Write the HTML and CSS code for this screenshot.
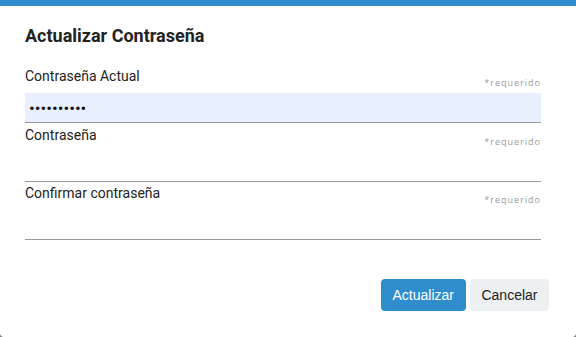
FILE: index.html
```html
<!DOCTYPE html>
<html lang="es">
<head>
    <meta charset="UTF-8">
    <meta name="viewport" content="width=device-width, initial-scale=1.0">
    <title>Actualizar Contraseña</title>
    <link rel="stylesheet" href="styles.css">
</head>
<body>
    <div class="dialog">
        <div class="dialog-bar"></div>
        <div class="dialog-body">
            <h2 class="dialog-title">Actualizar Contraseña</h2>
            <form class="form">
                <div class="field">
                    <div class="field-head">
                        <label for="current">Contraseña Actual</label>
                        <span class="required">*requerido</span>
                    </div>
                    <input id="current" class="input filled" type="password" value="0123456789">
                </div>
                <div class="field">
                    <div class="field-head">
                        <label for="password">Contraseña</label>
                        <span class="required">*requerido</span>
                    </div>
                    <input id="password" class="input" type="password">
                </div>
                <div class="field">
                    <div class="field-head">
                        <label for="confirm">Confirmar contraseña</label>
                        <span class="required">*requerido</span>
                    </div>
                    <input id="confirm" class="input" type="password">
                </div>
            </form>
        </div>
        <div class="dialog-footer">
            <button class="btn btn-primary" type="button">Actualizar</button>
            <button class="btn btn-light" type="button">Cancelar</button>
        </div>
    </div>
</body>
</html>
```

FILE: styles.css
```css
html, body {
    margin: 0;
    padding: 0;
    background: #7a7a7a;
}
body {
    font-family: Roboto, "Liberation Sans", Arial, sans-serif;
    color: #222;
}
.dialog {
    width: 576px;
    height: 337px;
    background: #fff;
    border-radius: 0 0 4px 4px;
    display: flex;
    flex-direction: column;
}
.dialog-bar {
    height: 6px;
    background: #2f8dcd;
}
.dialog-body {
    padding: 19px 35px 0 25px;
}
.dialog-title {
    margin: 0;
    font-size: 18px;
    line-height: 22px;
    font-weight: 700;
    color: #222;
}
.form {
    margin-top: 21px;
}
.field {
    margin-bottom: 3.5px;
}
.field-head {
    display: flex;
    justify-content: space-between;
    align-items: flex-start;
    height: 25px;
}
.field-head label {
    font-size: 14px;
    line-height: 17px;
    color: #222;
}
.required {
    align-self: flex-end;
    margin-bottom: 5px;
    font-family: "Open Sans", "DejaVu Sans", sans-serif;
    font-size: 9px;
    line-height: 11px;
    letter-spacing: 1px;
    color: #9a9a9a;
}
.input {
    display: block;
    box-sizing: border-box;
    width: 100%;
    height: 30px;
    margin: 0;
    padding: 0 4px;
    border: none;
    border-bottom: 1px solid #999;
    background: transparent;
    font-family: Roboto, sans-serif;
    font-size: 17px;
    color: #111;
    outline: none;
}
.input.filled {
    background: #e8f0fe;
}
.dialog-footer {
    display: flex;
    justify-content: flex-end;
    gap: 4px;
    padding: 35px 27px 0 0;
}
.btn {
    height: 32px;
    padding: 0 12px;
    border: none;
    border-radius: 4px;
    font-family: "Liberation Sans", Arial, sans-serif;
    font-size: 14px;
    cursor: pointer;
}
.btn-primary {
    background: #2f8dcd;
    color: #fff;
}
.btn-light {
    padding: 0 11.5px;
    background: #ecf0f1;
    color: #222;
}
```
